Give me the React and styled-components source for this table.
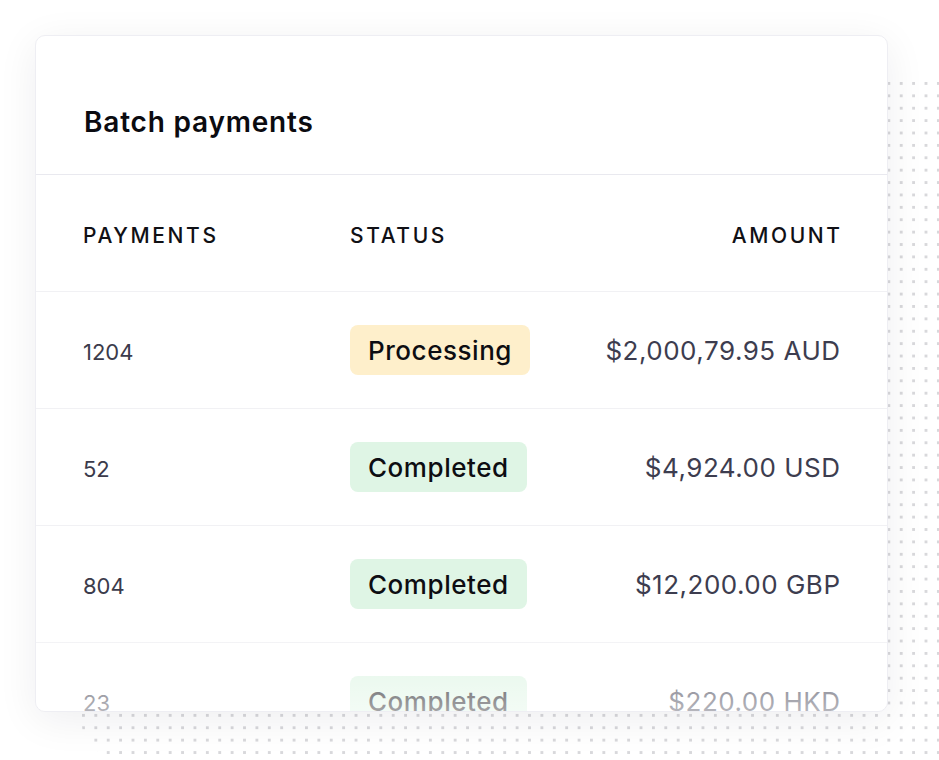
import React from "react";
import styled, { createGlobalStyle } from "styled-components";

const Global = createGlobalStyle`
  html, body { margin: 0; padding: 0; background: #fff; }
  body { font-family: "Inter", "Noto Sans", sans-serif; -webkit-font-smoothing: antialiased; }
`;

const Page = styled.div`
  position: relative;
  width: 939px;
  height: 760px;
  overflow: hidden;
  background: #fff;
  padding: 35px 0 0 35px;
  box-sizing: border-box;
`;

const Dots = styled.div`
  position: absolute;
  left: 82px;
  top: 82px;
  width: 890px;
  height: 673px;
  border-radius: 30px;
  background-color: #d8d8db;
  background-image:
    linear-gradient(90deg, transparent 3px, #fff 3px),
    linear-gradient(transparent 3px, #fff 3px);
  background-size: 12.4px 12.4px;
`;

const Card = styled.div`
  position: relative;
  width: 853px;
  height: 677px;
  background: #fff;
  border-radius: 10px;
  border: 1px solid #eeeef3;
  box-sizing: border-box;
  box-shadow: 0 8px 40px rgba(20, 20, 40, 0.07);
  overflow: hidden;
`;

const Header = styled.div`
  padding: 69px 48px 35px;
  border-bottom: 1px solid #e9e9ef;
`;

const Title = styled.h1`
  margin: 0;
  font-size: 28px;
  line-height: 34px;
  font-weight: 600;
  color: #0b0b10;
  letter-spacing: 0.8px;
`;

const Grid = styled.div`
  display: grid;
  grid-template-columns: 267px 1fr auto;
  align-items: center;
  height: 117px;
  padding: 0 47px 0 47px;
  border-bottom: 1px solid #f1f1f4;
  box-sizing: border-box;
`;

const HeadRow = styled(Grid)`
  height: 117px;
`;

const ColHead = styled.div`
  font-size: 21px;
  font-weight: 500;
  letter-spacing: 2.6px;
  color: #101015;
  text-transform: uppercase;
  padding-top: 5px;
  text-align: ${(p) => (p.$right ? "right" : "left")};
  margin-right: ${(p) => (p.$right ? "-2.6px" : "0")};
`;

const Count = styled.div`
  font-size: 22px;
  color: #3b3b4b;
  font-weight: 400;
  padding-top: 4px;
`;

const Badge = styled.span`
  justify-self: start;
  display: inline-flex;
  align-items: center;
  height: 50px;
  padding: 0 18px;
  border-radius: 8px;
  font-size: 26px;
  font-weight: 500;
  letter-spacing: 0.55px;
  color: #0d0d12;
  background: ${(p) => (p.$tone === "processing" ? "#feefcb" : "#dff5e5")};
`;

const Amount = styled.div`
  font-size: 26px;
  color: #3d3d4f;
  text-align: right;
  font-weight: 400;
  letter-spacing: 0.5px;
  margin-right: -0.5px;
`;

const Fade = styled.div`
  position: absolute;
  left: 0;
  right: 0;
  bottom: 0;
  height: 90px;
  background: linear-gradient(rgba(255, 255, 255, 0), rgba(255, 255, 255, 0.62));
  pointer-events: none;
`;

const rows = [
  { count: "1204", status: "Processing", tone: "processing", amount: "$2,000,79.95 AUD" },
  { count: "52", status: "Completed", tone: "completed", amount: "$4,924.00 USD" },
  { count: "804", status: "Completed", tone: "completed", amount: "$12,200.00 GBP" },
  { count: "23", status: "Completed", tone: "completed", amount: "$220.00 HKD" },
];

export default function App() {
  return (
    <>
      <Global />
      <Page>
        <Dots />
        <Card>
          <Header>
            <Title>Batch payments</Title>
          </Header>
          <HeadRow>
            <ColHead>Payments</ColHead>
            <ColHead>Status</ColHead>
            <ColHead $right>Amount</ColHead>
          </HeadRow>
          {rows.map((r) => (
            <Grid key={r.count}>
              <Count>{r.count}</Count>
              <Badge $tone={r.tone}>{r.status}</Badge>
              <Amount>{r.amount}</Amount>
            </Grid>
          ))}
          <Fade />
        </Card>
      </Page>
    </>
  );
}
